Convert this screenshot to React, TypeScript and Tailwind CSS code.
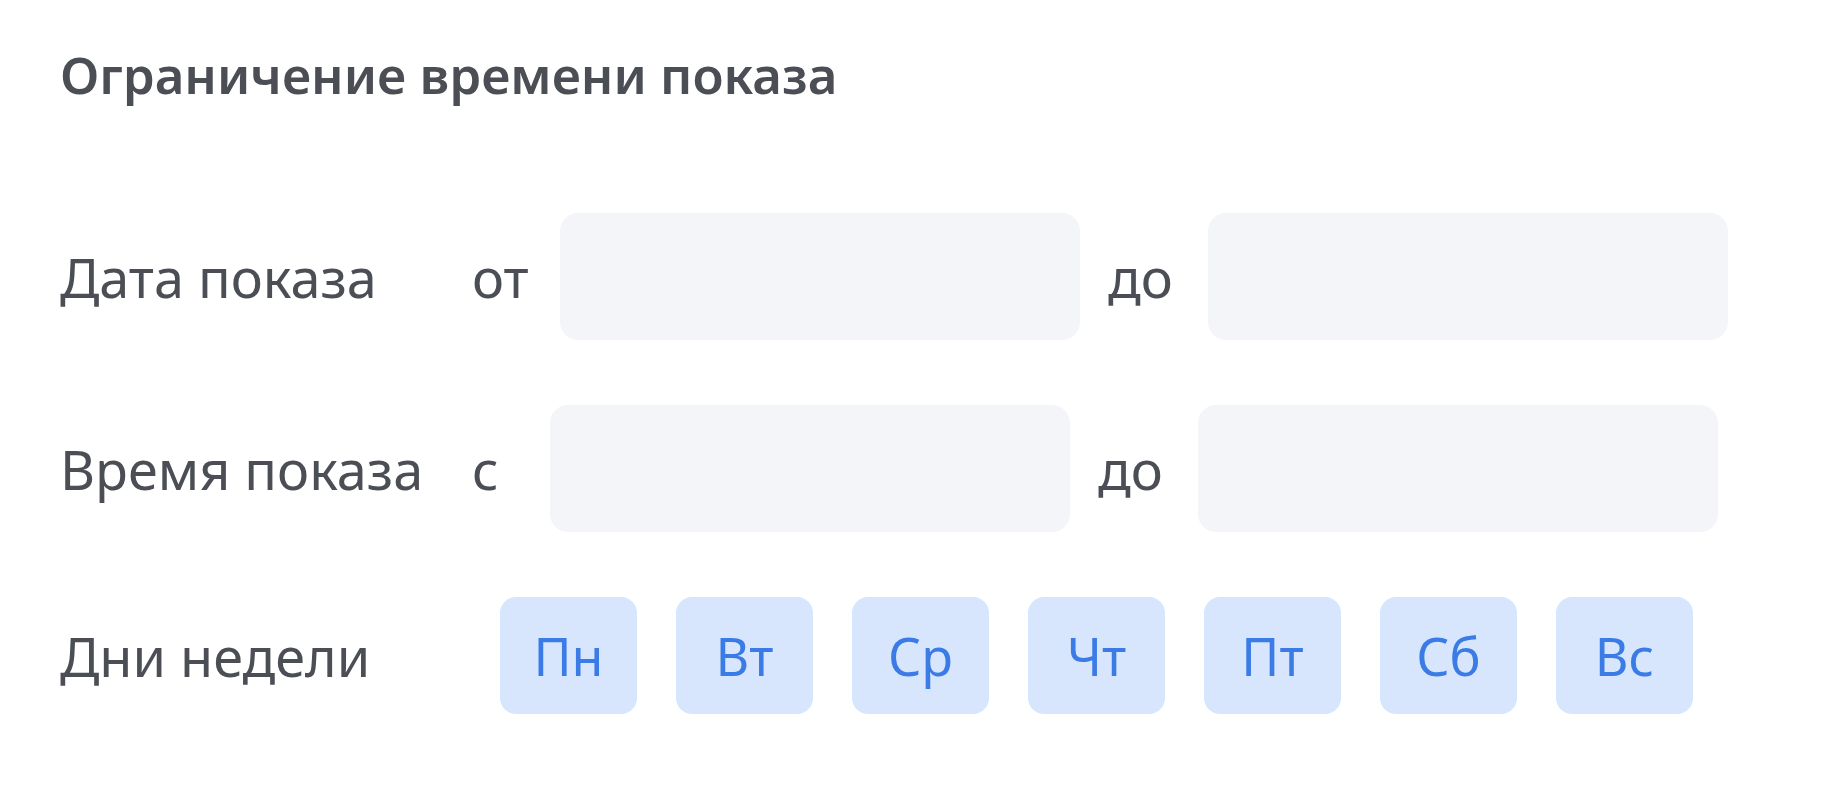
import React from "react";

const days = ["Пн", "Вт", "Ср", "Чт", "Пт", "Сб", "Вс"];

export default function App() {
  return (
    <div className="min-h-[790px] w-[1826px] bg-white text-[#4b4f55]" style={{ fontFamily: '"Noto Sans", "Open Sans", sans-serif' }}>
      <div className="pl-[60px] pt-[43px]">
        <h1 className="text-[51px] font-semibold leading-[62px] text-[#4b4f55]">Ограничение времени показа</h1>

        <div className="mt-[108px] flex h-[127px] items-center text-[54px] leading-none">
          <div className="w-[412px]">Дата показа</div>
          <div className="w-[88px]">от</div>
          <div className="h-[127px] w-[520px] rounded-[18px] bg-[#f3f5f8]" />
          <div className="w-[128px] pl-[28px]">до</div>
          <div className="h-[127px] w-[520px] rounded-[18px] bg-[#f3f5f8]" />
        </div>

        <div className="mt-[65px] flex h-[127px] items-center text-[54px] leading-none">
          <div className="w-[412px]">Время показа</div>
          <div className="w-[78px]">с</div>
          <div className="h-[127px] w-[520px] rounded-[18px] bg-[#f3f5f8]" />
          <div className="w-[128px] pl-[28px]">до</div>
          <div className="h-[127px] w-[520px] rounded-[18px] bg-[#f3f5f8]" />
        </div>

        <div className="mt-[65px] flex h-[117px] items-center text-[54px] leading-none">
          <div className="w-[440px]">Дни недели</div>
          <div className="flex gap-[39px] text-[52px]">
            {days.map((d) => (
              <div key={d} className="flex h-[117px] w-[137px] items-center justify-center rounded-[16px] bg-[#d7e6fc] text-[#3b7be6]">
                {d}
              </div>
            ))}
          </div>
        </div>
      </div>
    </div>
  );
}
